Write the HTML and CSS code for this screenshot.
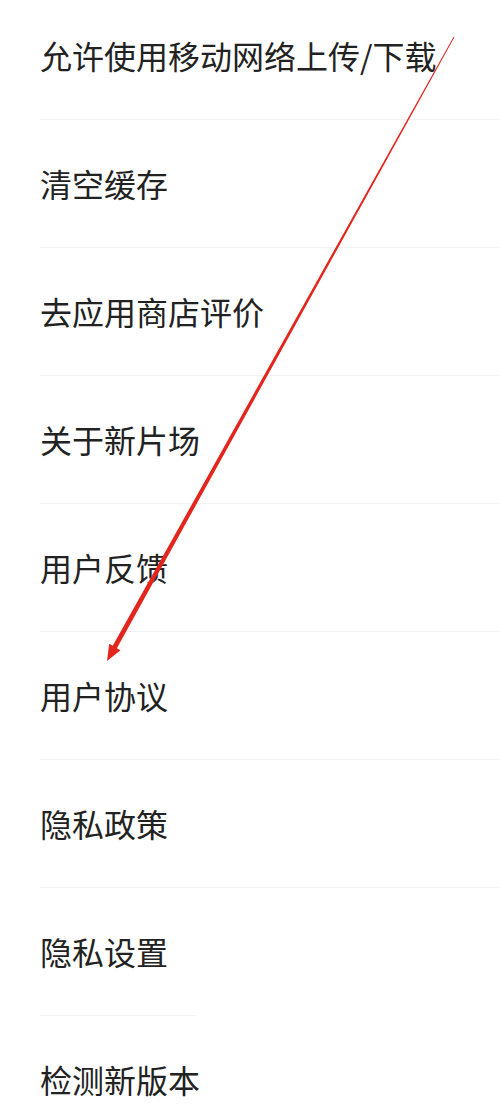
FILE: index.html
```html
<!DOCTYPE html>
<html lang="zh-CN">
<head>
<meta charset="utf-8">
<link rel="stylesheet" href="styles.css">
</head>
<body>
<div class="page">
  <ul class="menu">
    <li class="row"><span class="label">允许使用移动网络上传/下载</span></li>
    <li class="row"><span class="label">清空缓存</span></li>
    <li class="row"><span class="label">去应用商店评价</span></li>
    <li class="row"><span class="label">关于新片场</span></li>
    <li class="row"><span class="label">用户反馈</span></li>
    <li class="row"><span class="label">用户协议</span></li>
    <li class="row"><span class="label">隐私政策</span></li>
    <li class="row row-short"><span class="label">隐私设置</span></li>
    <li class="row row-last"><span class="label">检测新版本</span></li>
  </ul>
  <svg class="arrow" width="500" height="1113" viewBox="0 0 500 1113" xmlns="http://www.w3.org/2000/svg">
    <polygon fill="#e3261d" points="107,669 120.5,658.2 116.9,656.2 454.4,45.2 453.6,44.8 112.7,653.8 109.2,651.8"/>
  </svg>
</div>
</body>
</html>
```
FILE: styles.css
```css
html, body {
  margin: 0;
  padding: 0;
  background: #ffffff;
}
body {
  width: 500px;
  height: 1113px;
  overflow: hidden;
  font-family: "Noto Sans CJK SC", "Noto Sans", sans-serif;
  color: #222222;
}
.page {
  position: relative;
  width: 500px;
  height: 1113px;
}
.menu {
  list-style: none;
  margin: -8px 0 0 0;
  padding: 0 0 0 40px;
}
.row {
  height: 125px;
  padding-bottom: 2px;
  display: flex;
  align-items: center;
  border-bottom: 1px solid #f1f1f1;
}
.row-short {
  border-bottom: none;
  height: 126px;
  position: relative;
}
.row-short::after {
  content: "";
  position: absolute;
  left: 0;
  bottom: 0;
  width: 156px;
  height: 1px;
  background: #f1f1f1;
}
.row-last {
  border-bottom: none;
}
.label {
  font-size: 32px;
  line-height: 1;
  letter-spacing: 0;
}
.arrow {
  position: absolute;
  left: 0;
  top: 0;
  pointer-events: none;
}
```
